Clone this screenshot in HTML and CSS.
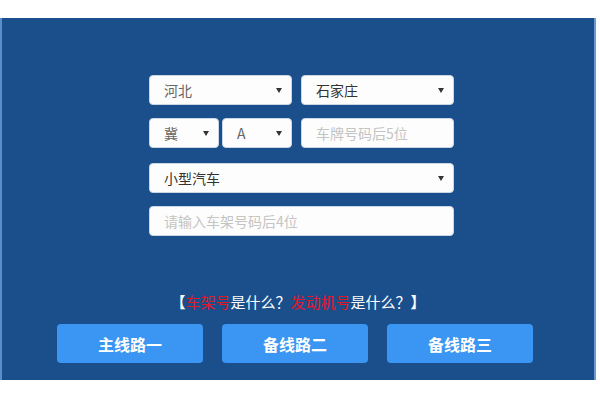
FILE: index.html
```html
<!DOCTYPE html>
<html lang="zh-CN">
<head>
<meta charset="utf-8">
<title>车辆查询</title>
<link rel="stylesheet" href="styles.css">
</head>
<body>
<div class="panel">
  <div class="form">
    <div class="row">
      <div class="field sel w143"><span class="val">河北</span><span class="arrow"></span></div>
      <div class="field sel w153"><span class="val dark">石家庄</span><span class="arrow"></span></div>
    </div>
    <div class="row">
      <div class="pair">
        <div class="field sel w70"><span class="val">冀</span><span class="arrow"></span></div>
        <div class="field sel w70"><span class="val">A</span><span class="arrow"></span></div>
      </div>
      <div class="field w153"><span class="ph">车牌号码后5位</span></div>
    </div>
    <div class="row">
      <div class="field sel wfull"><span class="val dark">小型汽车</span><span class="arrow"></span></div>
    </div>
    <div class="row">
      <div class="field wfull"><span class="ph">请输入车架号码后4位</span></div>
    </div>
  </div>
  <div class="help">
    <span class="br">【</span><span class="red">车架号</span>是什么？<span class="red">发动机号</span>是什么？<span class="br">】</span>
  </div>
  <div class="btns">
    <div class="btn">主线路一</div>
    <div class="btn">备线路二</div>
    <div class="btn">备线路三</div>
  </div>
</div>
</body>
</html>
```
FILE: styles.css
```css
html, body {
  margin: 0;
  padding: 0;
  background: #ffffff;
  font-family: "Noto Sans CJK SC", "Noto Sans", sans-serif;
}
.panel {
  margin: 18px 0 0 0;
  width: 596px;
  height: 362px;
  background: #1b4f8b;
  border-left: 2px solid #5b8fc9;
  border-right: 2px solid #6a9ad0;
  box-sizing: border-box;
  display: flex;
  flex-direction: column;
}
.form {
  margin: 57px 0 0 147px;
  width: 305px;
  display: flex;
  flex-direction: column;
  gap: 13px;
}
.row {
  display: flex;
  justify-content: space-between;
  height: 30px;
}
.row:nth-child(3) { margin-top: 2px; }
.pair {
  display: flex;
  gap: 3px;
}
.field {
  height: 30px;
  box-sizing: border-box;
  background: #fdfdfd;
  border: 1px solid #c9d6e6;
  border-radius: 4px;
  display: flex;
  align-items: center;
  padding: 0 9px 0 14px;
  font-size: 14px;
  color: #555;
}
.sel { justify-content: space-between; }
.w143 { width: 143px; }
.w153 { width: 153px; }
.w70 { width: 70px; }
.wfull { width: 305px; }
.val { color: #666; }
.val.dark { color: #333; }
.ph { color: #c4c4c4; }
.arrow {
  width: 0;
  height: 0;
  border-left: 3px solid transparent;
  border-right: 3px solid transparent;
  border-top: 5px solid #333;
}
.help {
  margin-top: 56px;
  text-align: center;
  font-size: 15px;
  color: #ffffff;
  line-height: 20px;
}
.br { font-weight: bold; }
.red { color: #e0192a; }
.btns {
  margin: 12px 0 0 55px;
  display: flex;
  gap: 19px;
}
.btn {
  width: 146px;
  height: 39px;
  background: #3a95f3;
  border-radius: 4px;
  color: #ffffff;
  font-size: 16px;
  font-weight: bold;
  display: flex;
  align-items: center;
  justify-content: center;
}
```
